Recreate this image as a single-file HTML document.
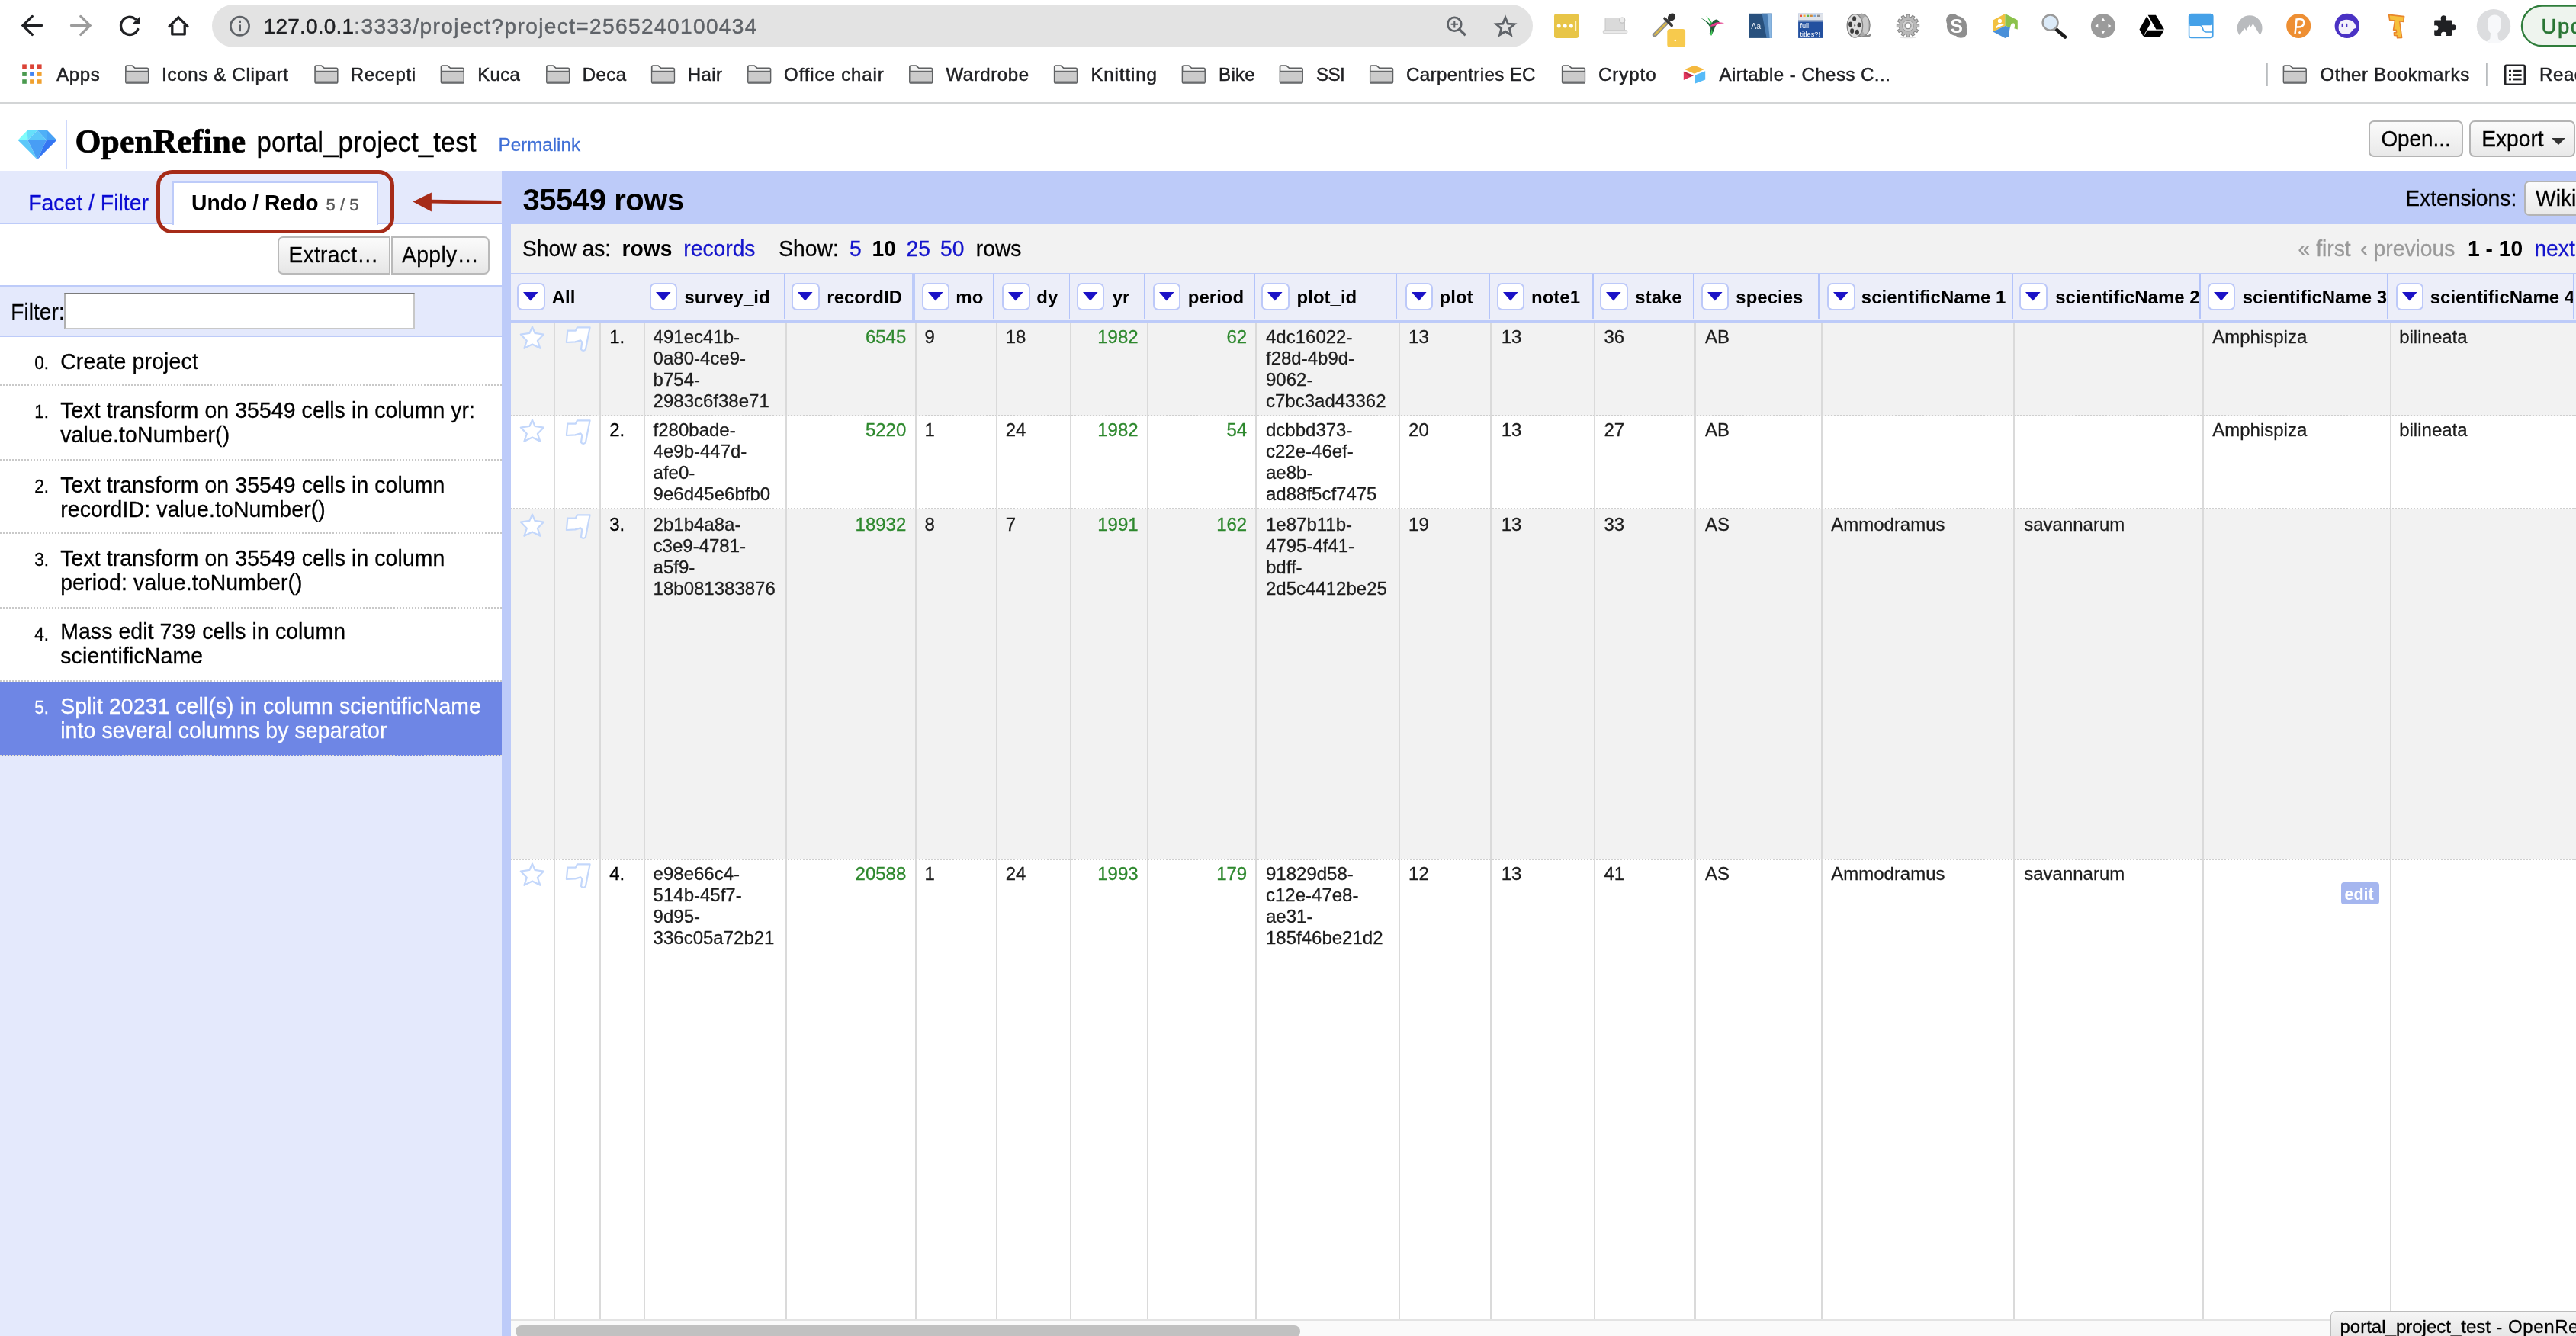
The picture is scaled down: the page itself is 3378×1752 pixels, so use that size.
<!DOCTYPE html>
<html lang="en"><head><meta charset="utf-8"><title>portal_project_test - OpenRefine</title>
<style>
html,body{margin:0;padding:0}
body{width:3378px;height:1752px;position:relative;overflow:hidden;background:#fff;font-family:'Liberation Sans',sans-serif;}
#page{position:absolute;left:0;top:0;width:3378px;height:1752px;overflow:hidden;will-change:transform}
.t{position:absolute;white-space:pre;line-height:1em;-webkit-text-stroke:0.3px;}
.r{position:absolute;}
svg{position:absolute;overflow:visible}
.ml{position:absolute;white-space:pre;}
</style></head>
<body>
<div id="page">
<svg style="left:0;top:0" width="3378" height="135" viewBox="0 0 3378 135"><rect x="278" y="6" width="1732" height="56" rx="28" fill="#e3e3e3"/>
<path d="M54.6,33.4 H31 M42.3,21.4 L30,33.4 L42.3,45.4" fill="none" stroke="#202124" stroke-width="3.3" stroke-linecap="round" stroke-linejoin="miter"/>
<path d="M93.5,33.4 H117 M105.8,21.4 L118.1,33.4 L105.8,45.4" fill="none" stroke="#9c9c9c" stroke-width="3.3" stroke-linecap="round" stroke-linejoin="miter"/>
<path d="M177.6,25 A11.6,11.6 0 1 0 180.8,38.4" fill="none" stroke="#202124" stroke-width="3.3" stroke-linecap="round"/>
<polygon points="184,21 184,31.8 173.2,31.8" fill="#202124"/>
<path d="M222,34.6 L234,22.8 L246,34.6" fill="none" stroke="#202124" stroke-width="3.3" stroke-linecap="round" stroke-linejoin="miter"/>
<path d="M225.8,32.5 V44.9 H242.2 V32.5" fill="none" stroke="#202124" stroke-width="3.3" stroke-linejoin="round"/>
<circle cx="314.5" cy="34.3" r="12.1" fill="none" stroke="#5f6368" stroke-width="2.7"/>
<rect x="313" y="26.8" width="3" height="3.2" fill="#5f6368"/><rect x="313" y="32.4" width="3" height="8.8" fill="#5f6368"/>
<circle cx="1907.3" cy="31.8" r="8.9" fill="none" stroke="#5f6368" stroke-width="2.8"/>
<path d="M1913.9,38.6 L1921.8,46.3" stroke="#5f6368" stroke-width="3.4" stroke-linecap="butt"/>
<path d="M1902.6,31.8 H1912 M1907.3,27.1 V36.5" stroke="#5f6368" stroke-width="2.1"/>
<polygon points="1974.05,23.00 1977.34,31.07 1986.03,31.71 1979.38,37.33 1981.46,45.79 1974.05,41.20 1966.64,45.79 1968.72,37.33 1962.07,31.71 1970.76,31.07" fill="none" stroke="#5f6368" stroke-width="2.8" stroke-linejoin="miter"/>
<rect x="2038" y="18" width="32.2" height="32" rx="3.2" fill="#e8c547"/>
<circle cx="2044.2" cy="34" r="2.5" fill="#fff"/>
<circle cx="2052.2" cy="34" r="2.5" fill="#fff"/>
<circle cx="2060.4" cy="34" r="2.5" fill="#fff"/>
<rect x="2065.6" y="27.6" width="1.6" height="12.8" fill="#fff3c8"/>
<path d="M2106,23.5 H2129.5 Q2130.5,23.5 2130.5,24.5 V39.6 H2105 V24.5 Q2105,23.5 2106,23.5Z" fill="#dadada" stroke="#c6c6c6" stroke-width="1"/>
<rect x="2102.3" y="39.6" width="31.5" height="4.2" rx="1.4" fill="#e9e9e9" stroke="#c9c9c9" stroke-width="0.9"/>
<circle cx="2127.2" cy="26.6" r="3.6" fill="#ececec" stroke="#c2c2c2" stroke-width="1.2"/>
<path d="M2169.6,46 L2187.6,27.6" stroke="#8d8d8d" stroke-width="5.6" stroke-linecap="round"/>
<path d="M2170.4,45.2 L2184.5,30.8" stroke="#d9b84a" stroke-width="2.6" stroke-linecap="round"/>
<path d="M2183,24.2 L2192.2,33.4" stroke="#3a3a3a" stroke-width="3.6" stroke-linecap="round"/>
<ellipse cx="2192" cy="22.6" rx="5.6" ry="4.6" transform="rotate(-45 2192 22.6)" fill="#2f2f2f"/>
<rect x="2186.3" y="38" width="23.8" height="24" rx="3.6" fill="#f7ca4d"/>
<circle cx="2196.8" cy="53" r="1.3" fill="#fff"/>
<path d="M2229.8,23.4 Q2238.6,26.6 2244.6,33.8 L2242.4,35.4 Q2237.6,27.6 2229.8,23.4Z" fill="#1f6e3c"/>
<path d="M2237.2,20.9 Q2243.4,25.2 2246.2,32.4 L2243.4,33.6 Q2242,26.4 2237.2,20.9Z" fill="#3fc255"/>
<path d="M2243.2,33 Q2246,27 2250.2,25.6 Q2254.2,26 2254.6,29.6 Q2250.6,31.4 2248.8,36 Q2247.4,41 2244.2,46.4 L2241.6,44.6 Q2243.8,39.6 2243.2,33Z" fill="#1f5a36"/>
<path d="M2244.6,38 Q2246.6,42 2244.4,46.6 L2242.6,46 Q2244,42 2244.6,38Z" fill="#45cf5c"/>
<path d="M2242.2,34.6 Q2247,29.6 2253.8,29 Q2258.4,29.4 2261.4,31.4 Q2256.4,30.6 2252.6,32 Q2247.4,35.4 2242.2,34.6Z" fill="#e23b8c"/>
<path d="M2255,29.6 Q2258.6,29.6 2261.4,31.4" fill="none" stroke="#f3a6c8" stroke-width="1"/>
<rect x="2293.7" y="17.8" width="30.1" height="32.1" fill="#28507d"/>
<polygon points="2310.6,17.8 2323.8,17.8 2323.8,49.9 2316.6,49.9" fill="#4a7db3"/>
<polygon points="2317.6,17.8 2323.8,17.8 2323.8,49.9 2320.6,49.9" fill="#8bb7e2"/>
<text x="2296.2" y="38.4" font-family="Liberation Sans, sans-serif" font-size="10.5" fill="#e8eef6">Aa</text>
<rect x="2358.1" y="17.8" width="31.9" height="32.1" fill="#23509f"/>
<rect x="2358.1" y="17.8" width="31.9" height="8.6" fill="#dfe3ea"/>
<rect x="2358.1" y="26.4" width="31.9" height="2" fill="#b8c3d6"/>
<rect x="2360.0" y="19.6" width="3" height="2.4" fill="#e8553d"/>
<rect x="2364.6" y="19.6" width="3" height="2.4" fill="#f3b13a"/>
<rect x="2369.2" y="19.6" width="3" height="2.4" fill="#5fb24c"/>
<rect x="2373.8" y="19.6" width="3" height="2.4" fill="#d08a3c"/>
<rect x="2378.4" y="19.6" width="3" height="2.4" fill="#7aa7d9"/>
<rect x="2383.0" y="19.6" width="3" height="2.4" fill="#8f8f8f"/>
<text x="2360.4" y="37.4" font-family="Liberation Sans, sans-serif" font-size="9.2" fill="#fff">full</text>
<text x="2360.4" y="47.6" font-family="Liberation Sans, sans-serif" font-size="9.2" fill="#fff">titles?!</text>
<ellipse cx="2441.6" cy="33.2" rx="10.6" ry="15" fill="#a9a9a9" stroke="#7c7c7c" stroke-width="1"/>
<path d="M2446,45 Q2450.8,47.8 2453.8,42.2 L2453.8,46.4 Q2450,50.4 2443,48.4Z" fill="#8a8a8a"/>
<ellipse cx="2446" cy="33" rx="4.4" ry="11.6" fill="#c9c9c9"/>
<ellipse cx="2432.4" cy="33.8" rx="10.2" ry="15.2" fill="#dedede" stroke="#808080" stroke-width="1.3"/>
<ellipse cx="2431.6" cy="24.6" rx="2.5" ry="3.4" fill="#3d3d3d"/>
<ellipse cx="2426.6" cy="31.8" rx="2.5" ry="3.4" fill="#3d3d3d"/>
<ellipse cx="2428.6" cy="40.6" rx="2.5" ry="3.4" fill="#3d3d3d"/>
<ellipse cx="2435.4" cy="42.2" rx="2.5" ry="3.4" fill="#3d3d3d"/>
<ellipse cx="2438" cy="32.8" rx="2.5" ry="3.4" fill="#3d3d3d"/>
<ellipse cx="2432.2" cy="33.4" rx="1" ry="1.4" fill="#555"/>
<polygon points="2513.42,31.79 2516.61,32.14 2516.61,35.46 2513.42,35.81 2512.90,37.77 2515.48,39.66 2513.82,42.54 2510.89,41.26 2509.46,42.69 2510.74,45.62 2507.86,47.28 2505.97,44.70 2504.01,45.22 2503.66,48.41 2500.34,48.41 2499.99,45.22 2498.03,44.70 2496.14,47.28 2493.26,45.62 2494.54,42.69 2493.11,41.26 2490.18,42.54 2488.52,39.66 2491.10,37.77 2490.58,35.81 2487.39,35.46 2487.39,32.14 2490.58,31.79 2491.10,29.83 2488.52,27.94 2490.18,25.06 2493.11,26.34 2494.54,24.91 2493.26,21.98 2496.14,20.32 2498.03,22.90 2499.99,22.38 2500.34,19.19 2503.66,19.19 2504.01,22.38 2505.97,22.90 2507.86,20.32 2510.74,21.98 2509.46,24.91 2510.89,26.34 2513.82,25.06 2515.48,27.94 2512.90,29.83" fill="#b9b9b9" stroke="#8a8a8a" stroke-width="1.1" stroke-linejoin="round"/>
<circle cx="2502" cy="33.8" r="7.4" fill="#cfcfcf" stroke="#9a9a9a" stroke-width="1"/>
<circle cx="2502" cy="33.8" r="3.9" fill="#fff" stroke="#8b8b8b" stroke-width="1.3"/>
<ellipse cx="2502" cy="49.4" rx="11" ry="0.9" fill="#e3e3e3"/>
<circle cx="2560.6" cy="26.6" r="8.6" fill="#8e8e8e"/><circle cx="2571.4" cy="41.2" r="8.6" fill="#8e8e8e"/><circle cx="2566" cy="34" r="13" fill="#8e8e8e"/>
<text x="2557.2" y="42.6" font-family="Liberation Sans, sans-serif" font-weight="700" font-size="25" fill="#fff">S</text>
<polygon points="2613.4,26.6 2629.4,18 2629.4,34 2613.4,41.4" fill="#f2c141"/>
<polygon points="2629.4,18 2645.8,26.6 2645.8,38.6 2636,36 2629.4,34" fill="#8cc24c"/>
<polygon points="2613.4,41.4 2629.4,34 2636,36 2634,48 2629.4,50" fill="#4a90d9"/>
<circle cx="2622.4" cy="27.4" r="2.6" fill="#fff"/><path d="M2617,35.6 Q2622.4,29 2627.8,32.4 L2617,37.4Z" fill="#fff"/>
<path d="M2636,36 Q2637,30 2641,30.6 Q2643,32 2641,38.6 L2634,48Z" fill="#fff"/>
<path d="M2696.4,38.4 L2708,48.6" stroke="#1c1c1c" stroke-width="4.6" stroke-linecap="round"/>
<circle cx="2688.6" cy="29.6" r="10" fill="#dcebf9" stroke="#9a9a9a" stroke-width="2.4"/>
<circle cx="2757.9" cy="34" r="16" fill="#9b9b9b"/>
<polygon points="2757.9,23.4 2760.4,27.4 2755.4,27.4" fill="#fff"/><polygon points="2757.9,44.6 2760.4,40.6 2755.4,40.6" fill="#fff"/>
<polygon points="2747.3,34 2751.3,31.5 2751.3,36.5" fill="#fff"/><polygon points="2768.5,34 2764.5,31.5 2764.5,36.5" fill="#fff"/>
<polygon points="2816.6,19.8 2827,19.8 2838,38.6 2827.4,38.6" fill="#000"/>
<polygon points="2815.2,21.2 2820.4,30.2 2810.4,47.6 2805.5,38.6" fill="#000"/>
<polygon points="2815.8,39.8 2837.8,39.8 2832.6,48.2 2811,48.2" fill="#000"/>
<rect x="2870.6" y="18.6" width="31.2" height="30.8" rx="3" fill="#fff" stroke="#45a1e8" stroke-width="1.6"/>
<rect x="2870.6" y="18.6" width="31.2" height="14.6" rx="3" fill="#45a1e8"/>
<path d="M2871.4,33.2 H2884.6 Q2887.6,33.4 2888.6,37.6 Q2889.6,42 2893.2,42 H2901" fill="none" stroke="#45a1e8" stroke-width="1.6"/>
<path d="M2936.6,46 A16.4,16.4 0 1 1 2963.6,46 L2954.4,31 L2951.6,35.6 L2949.8,32.6 L2945.4,40 L2943.4,37 Z" fill="#b9bbbe"/>
<circle cx="3014.2" cy="33.9" r="16" fill="#ee8f33"/>
<path d="M3009.6,43.6 L3011.6,25.4 Q3021.6,23.6 3021.2,30.2 Q3020.6,36.4 3011,35.2" fill="none" stroke="#fff" stroke-width="2.5" stroke-linecap="round"/><circle cx="3015.6" cy="42.6" r="1.5" fill="#fff"/>
<circle cx="3077.8" cy="33.9" r="16.2" fill="#4a32c4"/>
<path d="M3066.6,36.6 Q3066.6,25.8 3077,25.8 Q3088.2,25.8 3089.8,37 Q3086,37.4 3084.4,40.6 Q3080.6,45.8 3073.6,45 Q3066.6,43.6 3066.6,36.6Z" fill="#f3f0fb"/>
<rect x="3070.6" y="30.8" width="2.3" height="5.2" rx="1.1" fill="#4a32c4"/><rect x="3076" y="30.8" width="2.3" height="5.2" rx="1.1" fill="#4a32c4"/>
<path d="M3132.6,19.4 L3152.6,21.6 L3151.8,28.4 L3146.6,27.8 L3149.6,49.4 L3143.6,49.8 L3143.2,46.6 L3139.6,46.4 L3139.4,42.8 L3142.6,42.6 L3142.2,39.4 L3138.6,39.2 L3140.4,27 L3133.6,26.2Z" fill="#f6c03c" stroke="#e8862c" stroke-width="1.6" stroke-linejoin="round"/>
<path d="M3193.6,26.4 H3201 Q3199.4,20.4 3204.4,20.2 Q3209.4,20.4 3207.8,26.4 H3214 Q3215.4,26.4 3215.4,27.8 V32.6 Q3220.6,31.2 3220.6,35.8 Q3220.6,40.4 3215.4,39 V45.6 Q3215.4,47 3214,47 H3208 Q3209.2,41.8 3204.6,41.8 Q3200,41.8 3201.2,47 H3193.6 Q3192.2,47 3192.2,45.6 V39.4 Q3197.4,40.4 3197.4,36.4 Q3197.4,32.4 3192.2,33.4 V27.8 Q3192.2,26.4 3193.6,26.4Z" fill="#202124"/>
<circle cx="3270" cy="34.2" r="22.2" fill="#dcdddf"/>
<path d="M3262,33 Q3261,19.6 3271.4,19.4 Q3281.4,19.6 3279.8,33.4 Q3278.6,41 3275.2,43.6 L3276,50.6 Q3278,54 3281,55 Q3270,58.6 3260,54.6 Q3264,53.4 3265.4,50.6 L3266,43.6 Q3263,41 3262,33Z" fill="#f7f8fa"/>
<rect x="3307" y="7.6" width="120" height="52.6" rx="26.3" fill="#eef4ee" stroke="#2f7d3b" stroke-width="2.4"/>
<rect x="29.2" y="84.4" width="5.6" height="5.6" fill="#db4437"/>
<rect x="39.1" y="84.4" width="5.6" height="5.6" fill="#db4437"/>
<rect x="49.0" y="84.4" width="5.6" height="5.6" fill="#db4437"/>
<rect x="29.2" y="94.3" width="5.6" height="5.6" fill="#4a9a4f"/>
<rect x="39.1" y="94.3" width="5.6" height="5.6" fill="#4285f4"/>
<rect x="49.0" y="94.3" width="5.6" height="5.6" fill="#f0a12f"/>
<rect x="29.2" y="104.2" width="5.6" height="5.6" fill="#4a9a4f"/>
<rect x="39.1" y="104.2" width="5.6" height="5.6" fill="#f0a12f"/>
<rect x="49.0" y="104.2" width="5.6" height="5.6" fill="#f0a12f"/>
<g transform="translate(164.00,85.2)"><path d="M0.9,2.6 Q0.9,0.9 2.6,0.9 L9.3,0.9 L13.1,4.2 L28.8,4.2 Q30.5,4.2 30.5,5.9 L30.5,22 Q30.5,23.7 28.8,23.7 L2.6,23.7 Q0.9,23.7 0.9,22 Z" fill="#f2f2f2" stroke="#5f6163" stroke-width="1.7" stroke-linejoin="round"/><rect x="1.7" y="8.3" width="28" height="13.6" fill="#cbcbcb"/><path d="M1,8.3 L30.4,8.3" stroke="#67696b" stroke-width="1.5"/><path d="M1.6,22.4 L29.8,22.4" stroke="#707274" stroke-width="2.2"/></g>
<g transform="translate(412.20,85.2)"><path d="M0.9,2.6 Q0.9,0.9 2.6,0.9 L9.3,0.9 L13.1,4.2 L28.8,4.2 Q30.5,4.2 30.5,5.9 L30.5,22 Q30.5,23.7 28.8,23.7 L2.6,23.7 Q0.9,23.7 0.9,22 Z" fill="#f2f2f2" stroke="#5f6163" stroke-width="1.7" stroke-linejoin="round"/><rect x="1.7" y="8.3" width="28" height="13.6" fill="#cbcbcb"/><path d="M1,8.3 L30.4,8.3" stroke="#67696b" stroke-width="1.5"/><path d="M1.6,22.4 L29.8,22.4" stroke="#707274" stroke-width="2.2"/></g>
<g transform="translate(577.60,85.2)"><path d="M0.9,2.6 Q0.9,0.9 2.6,0.9 L9.3,0.9 L13.1,4.2 L28.8,4.2 Q30.5,4.2 30.5,5.9 L30.5,22 Q30.5,23.7 28.8,23.7 L2.6,23.7 Q0.9,23.7 0.9,22 Z" fill="#f2f2f2" stroke="#5f6163" stroke-width="1.7" stroke-linejoin="round"/><rect x="1.7" y="8.3" width="28" height="13.6" fill="#cbcbcb"/><path d="M1,8.3 L30.4,8.3" stroke="#67696b" stroke-width="1.5"/><path d="M1.6,22.4 L29.8,22.4" stroke="#707274" stroke-width="2.2"/></g>
<g transform="translate(716.00,85.2)"><path d="M0.9,2.6 Q0.9,0.9 2.6,0.9 L9.3,0.9 L13.1,4.2 L28.8,4.2 Q30.5,4.2 30.5,5.9 L30.5,22 Q30.5,23.7 28.8,23.7 L2.6,23.7 Q0.9,23.7 0.9,22 Z" fill="#f2f2f2" stroke="#5f6163" stroke-width="1.7" stroke-linejoin="round"/><rect x="1.7" y="8.3" width="28" height="13.6" fill="#cbcbcb"/><path d="M1,8.3 L30.4,8.3" stroke="#67696b" stroke-width="1.5"/><path d="M1.6,22.4 L29.8,22.4" stroke="#707274" stroke-width="2.2"/></g>
<g transform="translate(853.80,85.2)"><path d="M0.9,2.6 Q0.9,0.9 2.6,0.9 L9.3,0.9 L13.1,4.2 L28.8,4.2 Q30.5,4.2 30.5,5.9 L30.5,22 Q30.5,23.7 28.8,23.7 L2.6,23.7 Q0.9,23.7 0.9,22 Z" fill="#f2f2f2" stroke="#5f6163" stroke-width="1.7" stroke-linejoin="round"/><rect x="1.7" y="8.3" width="28" height="13.6" fill="#cbcbcb"/><path d="M1,8.3 L30.4,8.3" stroke="#67696b" stroke-width="1.5"/><path d="M1.6,22.4 L29.8,22.4" stroke="#707274" stroke-width="2.2"/></g>
<g transform="translate(980.00,85.2)"><path d="M0.9,2.6 Q0.9,0.9 2.6,0.9 L9.3,0.9 L13.1,4.2 L28.8,4.2 Q30.5,4.2 30.5,5.9 L30.5,22 Q30.5,23.7 28.8,23.7 L2.6,23.7 Q0.9,23.7 0.9,22 Z" fill="#f2f2f2" stroke="#5f6163" stroke-width="1.7" stroke-linejoin="round"/><rect x="1.7" y="8.3" width="28" height="13.6" fill="#cbcbcb"/><path d="M1,8.3 L30.4,8.3" stroke="#67696b" stroke-width="1.5"/><path d="M1.6,22.4 L29.8,22.4" stroke="#707274" stroke-width="2.2"/></g>
<g transform="translate(1192.00,85.2)"><path d="M0.9,2.6 Q0.9,0.9 2.6,0.9 L9.3,0.9 L13.1,4.2 L28.8,4.2 Q30.5,4.2 30.5,5.9 L30.5,22 Q30.5,23.7 28.8,23.7 L2.6,23.7 Q0.9,23.7 0.9,22 Z" fill="#f2f2f2" stroke="#5f6163" stroke-width="1.7" stroke-linejoin="round"/><rect x="1.7" y="8.3" width="28" height="13.6" fill="#cbcbcb"/><path d="M1,8.3 L30.4,8.3" stroke="#67696b" stroke-width="1.5"/><path d="M1.6,22.4 L29.8,22.4" stroke="#707274" stroke-width="2.2"/></g>
<g transform="translate(1381.80,85.2)"><path d="M0.9,2.6 Q0.9,0.9 2.6,0.9 L9.3,0.9 L13.1,4.2 L28.8,4.2 Q30.5,4.2 30.5,5.9 L30.5,22 Q30.5,23.7 28.8,23.7 L2.6,23.7 Q0.9,23.7 0.9,22 Z" fill="#f2f2f2" stroke="#5f6163" stroke-width="1.7" stroke-linejoin="round"/><rect x="1.7" y="8.3" width="28" height="13.6" fill="#cbcbcb"/><path d="M1,8.3 L30.4,8.3" stroke="#67696b" stroke-width="1.5"/><path d="M1.6,22.4 L29.8,22.4" stroke="#707274" stroke-width="2.2"/></g>
<g transform="translate(1549.60,85.2)"><path d="M0.9,2.6 Q0.9,0.9 2.6,0.9 L9.3,0.9 L13.1,4.2 L28.8,4.2 Q30.5,4.2 30.5,5.9 L30.5,22 Q30.5,23.7 28.8,23.7 L2.6,23.7 Q0.9,23.7 0.9,22 Z" fill="#f2f2f2" stroke="#5f6163" stroke-width="1.7" stroke-linejoin="round"/><rect x="1.7" y="8.3" width="28" height="13.6" fill="#cbcbcb"/><path d="M1,8.3 L30.4,8.3" stroke="#67696b" stroke-width="1.5"/><path d="M1.6,22.4 L29.8,22.4" stroke="#707274" stroke-width="2.2"/></g>
<g transform="translate(1677.60,85.2)"><path d="M0.9,2.6 Q0.9,0.9 2.6,0.9 L9.3,0.9 L13.1,4.2 L28.8,4.2 Q30.5,4.2 30.5,5.9 L30.5,22 Q30.5,23.7 28.8,23.7 L2.6,23.7 Q0.9,23.7 0.9,22 Z" fill="#f2f2f2" stroke="#5f6163" stroke-width="1.7" stroke-linejoin="round"/><rect x="1.7" y="8.3" width="28" height="13.6" fill="#cbcbcb"/><path d="M1,8.3 L30.4,8.3" stroke="#67696b" stroke-width="1.5"/><path d="M1.6,22.4 L29.8,22.4" stroke="#707274" stroke-width="2.2"/></g>
<g transform="translate(1795.90,85.2)"><path d="M0.9,2.6 Q0.9,0.9 2.6,0.9 L9.3,0.9 L13.1,4.2 L28.8,4.2 Q30.5,4.2 30.5,5.9 L30.5,22 Q30.5,23.7 28.8,23.7 L2.6,23.7 Q0.9,23.7 0.9,22 Z" fill="#f2f2f2" stroke="#5f6163" stroke-width="1.7" stroke-linejoin="round"/><rect x="1.7" y="8.3" width="28" height="13.6" fill="#cbcbcb"/><path d="M1,8.3 L30.4,8.3" stroke="#67696b" stroke-width="1.5"/><path d="M1.6,22.4 L29.8,22.4" stroke="#707274" stroke-width="2.2"/></g>
<g transform="translate(2047.80,85.2)"><path d="M0.9,2.6 Q0.9,0.9 2.6,0.9 L9.3,0.9 L13.1,4.2 L28.8,4.2 Q30.5,4.2 30.5,5.9 L30.5,22 Q30.5,23.7 28.8,23.7 L2.6,23.7 Q0.9,23.7 0.9,22 Z" fill="#f2f2f2" stroke="#5f6163" stroke-width="1.7" stroke-linejoin="round"/><rect x="1.7" y="8.3" width="28" height="13.6" fill="#cbcbcb"/><path d="M1,8.3 L30.4,8.3" stroke="#67696b" stroke-width="1.5"/><path d="M1.6,22.4 L29.8,22.4" stroke="#707274" stroke-width="2.2"/></g>
<g transform="translate(2993.60,85.2)"><path d="M0.9,2.6 Q0.9,0.9 2.6,0.9 L9.3,0.9 L13.1,4.2 L28.8,4.2 Q30.5,4.2 30.5,5.9 L30.5,22 Q30.5,23.7 28.8,23.7 L2.6,23.7 Q0.9,23.7 0.9,22 Z" fill="#f2f2f2" stroke="#5f6163" stroke-width="1.7" stroke-linejoin="round"/><rect x="1.7" y="8.3" width="28" height="13.6" fill="#cbcbcb"/><path d="M1,8.3 L30.4,8.3" stroke="#67696b" stroke-width="1.5"/><path d="M1.6,22.4 L29.8,22.4" stroke="#707274" stroke-width="2.2"/></g>
<polygon points="2209.2,91 2221.8,85.8 2234.8,91 2221.8,96.8" fill="#f5b93f"/>
<polygon points="2207.8,93.8 2221,99 2207.8,105" fill="#e1365b"/><polygon points="2207.8,93.8 2221,99 2216,101.2" fill="#b62a4a"/>
<polygon points="2223,98.4 2236.2,93.2 2236.2,104.4 2223,109.6" fill="#57bbf8"/>
<rect x="2972" y="82" width="1.8" height="31" fill="#b9bcbf"/><rect x="3260" y="82" width="1.8" height="31" fill="#b9bcbf"/>
<rect x="3285.2" y="85.8" width="25.6" height="25" rx="1.6" fill="none" stroke="#202124" stroke-width="2.6"/>
<rect x="3290" y="91.8" width="3" height="2.8" fill="#202124"/><rect x="3295.6" y="91.8" width="11" height="2.8" fill="#202124"/>
<rect x="3290" y="97.2" width="3" height="2.8" fill="#202124"/><rect x="3295.6" y="97.2" width="11" height="2.8" fill="#202124"/>
<rect x="3290" y="102.6" width="3" height="2.8" fill="#202124"/><rect x="3295.6" y="102.6" width="11" height="2.8" fill="#202124"/></svg>
<div class="r" style="left:0.00px;top:134.20px;width:3378.00px;height:2.00px;background:#d3d5d6;"></div>
<span class="t" style="left:345.70px;top:21.00px;font-size:28px;color:#202124;letter-spacing:0.203px;-webkit-text-stroke:0.5px;">127.0.0.1</span>
<span class="t" style="left:464.30px;top:21.00px;font-size:28px;color:#5f6368;letter-spacing:1.406px;-webkit-text-stroke:0.5px;">:3333/project?project=2565240100434</span>
<span class="t" style="left:74.20px;top:86.00px;font-size:24px;color:#202124;letter-spacing:0.624px;-webkit-text-stroke:0.5px;">Apps</span>
<span class="t" style="left:212.10px;top:86.00px;font-size:24px;color:#202124;letter-spacing:0.696px;-webkit-text-stroke:0.5px;">Icons &amp; Clipart</span>
<span class="t" style="left:459.70px;top:86.00px;font-size:24px;color:#202124;letter-spacing:0.689px;-webkit-text-stroke:0.5px;">Recepti</span>
<span class="t" style="left:626.20px;top:86.00px;font-size:24px;color:#202124;letter-spacing:0.349px;-webkit-text-stroke:0.5px;">Kuca</span>
<span class="t" style="left:763.70px;top:86.00px;font-size:24px;color:#202124;letter-spacing:0.468px;-webkit-text-stroke:0.5px;">Deca</span>
<span class="t" style="left:901.70px;top:86.00px;font-size:24px;color:#202124;letter-spacing:0.398px;-webkit-text-stroke:0.5px;">Hair</span>
<span class="t" style="left:1028.10px;top:86.00px;font-size:24px;color:#202124;letter-spacing:0.889px;-webkit-text-stroke:0.5px;">Office chair</span>
<span class="t" style="left:1240.40px;top:86.00px;font-size:24px;color:#202124;letter-spacing:0.589px;-webkit-text-stroke:0.5px;">Wardrobe</span>
<span class="t" style="left:1430.40px;top:86.00px;font-size:24px;color:#202124;letter-spacing:0.919px;-webkit-text-stroke:0.5px;">Knitting</span>
<span class="t" style="left:1598.10px;top:86.00px;font-size:24px;color:#202124;letter-spacing:0.278px;-webkit-text-stroke:0.5px;">Bike</span>
<span class="t" style="left:1726.10px;top:86.00px;font-size:24px;color:#202124;letter-spacing:-0.528px;-webkit-text-stroke:0.5px;">SSI</span>
<span class="t" style="left:1844.00px;top:86.00px;font-size:24px;color:#202124;letter-spacing:0.410px;-webkit-text-stroke:0.5px;">Carpentries EC</span>
<span class="t" style="left:2096.00px;top:86.00px;font-size:24px;color:#202124;letter-spacing:0.985px;-webkit-text-stroke:0.5px;">Crypto</span>
<span class="t" style="left:2254.40px;top:86.00px;font-size:24px;color:#202124;letter-spacing:0.484px;-webkit-text-stroke:0.5px;">Airtable - Chess C...</span>
<span class="t" style="left:3042.50px;top:86.00px;font-size:24px;color:#202124;letter-spacing:0.645px;-webkit-text-stroke:0.5px;">Other Bookmarks</span>
<span class="t" style="left:3330.10px;top:86.00px;font-size:24px;color:#202124;letter-spacing:0.566px;-webkit-text-stroke:0.5px;">Reading list</span>
<span class="t" style="left:3332.60px;top:21.00px;font-size:27.5px;color:#2a7635;letter-spacing:1.554px;-webkit-text-stroke:0.55px;">Update</span>
<svg style="left:0;top:150px" width="110" height="80" viewBox="0 150 110 80">
<polygon points="23.5,183.8 35.7,171 36.3,183.8" fill="#7ffcfb"/>
<polygon points="35.7,171 48.9,171 36.3,183.8" fill="#66e0fa"/>
<polygon points="48.9,171 60.9,183.8 36.3,183.8" fill="#5cc8f9"/>
<polygon points="48.9,171 62.1,171 60.9,183.8" fill="#4fb0f7"/>
<polygon points="62.1,171 74.4,183.8 60.9,183.8" fill="#48a2f5"/>
<polygon points="23.5,183.8 36.3,183.8 48.9,209.3" fill="#5cc8f9"/>
<polygon points="36.3,183.8 60.9,183.8 48.9,209.3" fill="#489ef5"/>
<polygon points="60.9,183.8 74.4,183.8 48.9,209.3" fill="#3576f2"/>
</svg>
<div class="r" style="left:86.20px;top:158.00px;width:2.00px;height:63.70px;background:#ced8fb;"></div>
<span class="t" style="left:98.60px;top:164.00px;font-size:43.75px;color:#000;font-weight:700;-webkit-text-stroke:0;font-family:'Liberation Serif', serif;-webkit-text-stroke:0.7px #000;">OpenRefine</span>
<span class="t" style="left:336.60px;top:169.00px;font-size:35px;color:#000;transform:scaleY(1.035);transform-origin:0 30px;">portal_project_test</span>
<span class="t" style="left:653.50px;top:178.00px;font-size:24.2px;color:#3f6fd6;transform:scaleY(1.02);transform-origin:0 20px;">Permalink</span>
<div class="r" style="left:3106.00px;top:158.40px;width:123.60px;height:47.20px;background:;border:2px solid #b4b4b4;border-radius:7px;box-sizing:border-box;background:linear-gradient(#fbfbfb,#e9e9e9);"></div>
<span class="t" style="left:3122.40px;top:169.00px;font-size:27.9px;color:#000;transform:scaleY(1.035);transform-origin:0 23px;">Open...</span>
<div class="r" style="left:3238.40px;top:158.40px;width:138.80px;height:47.20px;background:;border:2px solid #b4b4b4;border-radius:7px;box-sizing:border-box;background:linear-gradient(#fbfbfb,#e9e9e9);"></div>
<span class="t" style="left:3254.20px;top:168.00px;font-size:28.2px;color:#000;transform:scaleY(1.035);transform-origin:0 24px;">Export</span>
<svg style="left:3346px;top:180.5px" width="18" height="9" viewBox="0 0 18 9"><polygon points="0,0 18,0 9,9" fill="#333"/></svg>
<div class="r" style="left:0.00px;top:223.70px;width:658.30px;height:1528.30px;background:#e4e9fc;"></div>
<div class="r" style="left:0.00px;top:291.80px;width:658.30px;height:2.10px;background:#bdcbf9;"></div>
<span class="t" style="left:37.20px;top:252.00px;font-size:28.4px;color:#0a0ad2;transform:scaleY(1.035);transform-origin:0 24px;">Facet / Filter</span>
<div class="r" style="left:0.00px;top:293.90px;width:658.30px;height:80.10px;background:#fff;"></div>
<div class="r" style="left:226.00px;top:238.20px;width:269.80px;height:57.30px;background:#fff;border:2px solid #bdcbf9;border-bottom:none;box-sizing:border-box;"></div>
<span class="t" style="left:251.00px;top:252.00px;font-size:28.3px;color:#000;font-weight:700;-webkit-text-stroke:0;transform:scaleY(1.02);transform-origin:0 24px;">Undo / Redo</span>
<span class="t" style="left:427.60px;top:258.00px;font-size:22.1px;color:#555;transform:scaleY(1.02);transform-origin:0 18px;">5 / 5</span>
<div class="r" style="left:364.30px;top:310.30px;width:147.80px;height:49.70px;background:;border:2px solid #b9b9b9;box-sizing:border-box;background:linear-gradient(#fbfbfb,#e6e6e6);border-radius:7px 0 0 7px;"></div>
<div class="r" style="left:513.00px;top:310.30px;width:128.70px;height:49.70px;background:;border:2px solid #b9b9b9;box-sizing:border-box;background:linear-gradient(#fbfbfb,#e6e6e6);border-radius:0 7px 7px 0;"></div>
<span class="t" style="left:378.40px;top:321.00px;font-size:28.1px;color:#000;letter-spacing:0.357px;transform:scaleY(1.035);transform-origin:0 23px;">Extract…</span>
<span class="t" style="left:526.90px;top:320.00px;font-size:28.3px;color:#000;letter-spacing:0.384px;transform:scaleY(1.035);transform-origin:0 24px;">Apply…</span>
<div class="r" style="left:0.00px;top:374.00px;width:658.30px;height:2.20px;background:#bdcbf9;"></div>
<span class="t" style="left:14.20px;top:396.00px;font-size:28px;color:#000;letter-spacing:0.086px;transform:scaleY(1.035);transform-origin:0 23px;">Filter:</span>
<div class="r" style="left:84.00px;top:384.20px;width:459.80px;height:47.40px;background:#fff;box-sizing:border-box;border:2px solid #c8c8c8;border-top-color:#7b7b7b;border-left-color:#b0b0b0;"></div>
<div class="r" style="left:0.00px;top:439.90px;width:658.30px;height:2.40px;background:#bdcbf9;"></div>
<div class="r" style="left:0.00px;top:442.30px;width:658.30px;height:451.90px;background:#fff;"></div>
<div class="r" style="left:0.00px;top:894.20px;width:658.30px;height:97.90px;background:#6e86e5;"></div>
<div class="r" style="left:0;top:503.8px;width:658.3px;border-top:2px dotted #c9c9c9;height:0;background:none;"></div>
<div class="r" style="left:0;top:602px;width:658.3px;border-top:2px dotted #c9c9c9;height:0;background:none;"></div>
<div class="r" style="left:0;top:697.8px;width:658.3px;border-top:2px dotted #c9c9c9;height:0;background:none;"></div>
<div class="r" style="left:0;top:795.8px;width:658.3px;border-top:2px dotted #c9c9c9;height:0;background:none;"></div>
<div class="r" style="left:0;top:892.2px;width:658.3px;border-top:2px dotted #c9c9c9;height:0;background:none;"></div>
<div class="r" style="left:0;top:990.1px;width:658.3px;border-top:2px dotted #e6e2d2;height:0"></div>
<span class="t" style="left:45.20px;top:466.00px;font-size:22.6px;color:#000;transform:scaleY(1.02);transform-origin:0 18px;">0.</span>
<span class="t" style="left:79.20px;top:460.00px;font-size:28.4px;color:#000;letter-spacing:0.180px;transform:scaleY(1.035);transform-origin:0 24px;">Create project</span>
<span class="t" style="left:45.20px;top:530.00px;font-size:22.6px;color:#000;transform:scaleY(1.02);transform-origin:0 18px;">1.</span>
<span class="t" style="left:79.20px;top:524.00px;font-size:28.4px;color:#000;letter-spacing:0.099px;transform:scaleY(1.035);transform-origin:0 24px;">Text transform on 35549 cells in column yr:</span>
<span class="t" style="left:79.20px;top:556.00px;font-size:28.4px;color:#000;letter-spacing:0.175px;transform:scaleY(1.035);transform-origin:0 24px;">value.toNumber()</span>
<span class="t" style="left:45.20px;top:628.00px;font-size:22.6px;color:#000;transform:scaleY(1.02);transform-origin:0 18px;">2.</span>
<span class="t" style="left:79.20px;top:622.00px;font-size:28.4px;color:#000;letter-spacing:0.103px;transform:scaleY(1.035);transform-origin:0 24px;">Text transform on 35549 cells in column</span>
<span class="t" style="left:79.20px;top:654.00px;font-size:28.4px;color:#000;letter-spacing:0.147px;transform:scaleY(1.035);transform-origin:0 24px;">recordID: value.toNumber()</span>
<span class="t" style="left:45.20px;top:724.00px;font-size:22.6px;color:#000;transform:scaleY(1.02);transform-origin:0 18px;">3.</span>
<span class="t" style="left:79.20px;top:718.00px;font-size:28.4px;color:#000;letter-spacing:0.103px;transform:scaleY(1.035);transform-origin:0 24px;">Text transform on 35549 cells in column</span>
<span class="t" style="left:79.20px;top:750.00px;font-size:28.4px;color:#000;letter-spacing:0.145px;transform:scaleY(1.035);transform-origin:0 24px;">period: value.toNumber()</span>
<span class="t" style="left:45.20px;top:822.00px;font-size:22.6px;color:#000;transform:scaleY(1.02);transform-origin:0 18px;">4.</span>
<span class="t" style="left:79.20px;top:814.00px;font-size:28.4px;color:#000;letter-spacing:0.105px;transform:scaleY(1.035);transform-origin:0 24px;">Mass edit 739 cells in column</span>
<span class="t" style="left:79.20px;top:846.00px;font-size:28.4px;color:#000;letter-spacing:0.174px;transform:scaleY(1.035);transform-origin:0 24px;">scientificName</span>
<span class="t" style="left:45.20px;top:918.00px;font-size:22.6px;color:#fff;transform:scaleY(1.02);transform-origin:0 18px;">5.</span>
<span class="t" style="left:79.20px;top:912.00px;font-size:28.4px;color:#fff;letter-spacing:0.095px;transform:scaleY(1.035);transform-origin:0 24px;">Split 20231 cell(s) in column scientificName</span>
<span class="t" style="left:79.20px;top:944.00px;font-size:28.4px;color:#fff;letter-spacing:0.117px;transform:scaleY(1.035);transform-origin:0 24px;">into several columns by separator</span>
<div class="r" style="left:204.70px;top:223.40px;width:312.60px;height:82.70px;background:none;box-sizing:border-box;border:5.2px solid #a62b18;border-radius:20.5px;"></div>
<svg style="left:535px;top:245px" width="130" height="40" viewBox="535 245 130 40">
<polygon points="564,261.8 657.4,262.9 657.4,267.9 564,266.5" fill="#a62b18"/>
<polygon points="541.5,264.6 565.9,252.5 565.9,277.6" fill="#a62b18"/>
</svg>
<div class="r" style="left:658.30px;top:223.70px;width:2719.70px;height:70.50px;background:#bdcbf9;"></div>
<div class="r" style="left:658.30px;top:223.70px;width:11.90px;height:1528.30px;background:#bdcbf9;"></div>
<span class="t" style="left:685.40px;top:242.00px;font-size:40px;color:#000;font-weight:700;-webkit-text-stroke:0;letter-spacing:-0.421px;transform:scaleY(1.02);transform-origin:0 34px;">35549 rows</span>
<span class="t" style="left:3154.20px;top:246.00px;font-size:28.25px;color:#000;transform:scaleY(1.035);transform-origin:0 24px;">Extensions:</span>
<div class="r" style="left:3310.30px;top:236.70px;width:89.70px;height:46.60px;background:;border:2px solid #b4b4b4;border-radius:7px;box-sizing:border-box;background:linear-gradient(#fbfbfb,#e9e9e9);"></div>
<span class="t" style="left:3325.00px;top:246.00px;font-size:28.25px;color:#000;transform:scaleY(1.035);transform-origin:0 24px;">Wikidata</span>
<div class="r" style="left:670.20px;top:294.20px;width:2707.80px;height:64.30px;background:#f2f2f2;"></div>
<span class="t" style="left:685.00px;top:312.00px;font-size:28.25px;color:#000;transform:scaleY(1.035);transform-origin:0 24px;">Show as:</span>
<span class="t" style="left:815.60px;top:312.00px;font-size:28.25px;color:#000;font-weight:700;-webkit-text-stroke:0;transform:scaleY(1.02);transform-origin:0 24px;">rows</span>
<span class="t" style="left:896.30px;top:312.00px;font-size:28.25px;color:#1414cc;transform:scaleY(1.035);transform-origin:0 24px;">records</span>
<span class="t" style="left:1021.25px;top:312.00px;font-size:28.25px;color:#000;transform:scaleY(1.035);transform-origin:0 24px;">Show:</span>
<span class="t" style="left:1114.00px;top:312.00px;font-size:28.25px;color:#1414cc;transform:scaleY(1.035);transform-origin:0 24px;">5</span>
<span class="t" style="left:1143.50px;top:312.00px;font-size:28.25px;color:#000;font-weight:700;-webkit-text-stroke:0;transform:scaleY(1.02);transform-origin:0 24px;">10</span>
<span class="t" style="left:1188.50px;top:312.00px;font-size:28.25px;color:#1414cc;transform:scaleY(1.035);transform-origin:0 24px;">25</span>
<span class="t" style="left:1233.00px;top:312.00px;font-size:28.25px;color:#1414cc;transform:scaleY(1.035);transform-origin:0 24px;">50</span>
<span class="t" style="left:1279.80px;top:312.00px;font-size:28.25px;color:#000;transform:scaleY(1.035);transform-origin:0 24px;">rows</span>
<span class="t" style="left:3013.60px;top:312.00px;font-size:28.25px;color:#999;transform:scaleY(1.035);transform-origin:0 24px;">« first</span>
<span class="t" style="left:3095.30px;top:312.00px;font-size:28.25px;color:#999;transform:scaleY(1.035);transform-origin:0 24px;">‹ previous</span>
<span class="t" style="left:3236.00px;top:312.00px;font-size:28.25px;color:#000;font-weight:700;-webkit-text-stroke:0;transform:scaleY(1.02);transform-origin:0 24px;">1 - 10</span>
<span class="t" style="left:3323.40px;top:312.00px;font-size:28.25px;color:#1414cc;transform:scaleY(1.035);transform-origin:0 24px;">next ›</span>
<div class="r" style="left:670.20px;top:357.60px;width:2707.80px;height:62.80px;background:#eceef9;border-top:1.5px solid #bdcbf9;box-sizing:border-box;"></div>
<div class="r" style="left:670.20px;top:420.20px;width:2707.80px;height:3.70px;background:#bdcbf9;"></div>
<div class="r" style="left:839.60px;top:359.00px;width:1.80px;height:58.50px;background:#b4c4fa;"></div>
<div class="r" style="left:1027.85px;top:359.00px;width:1.80px;height:58.50px;background:#b4c4fa;"></div>
<div class="r" style="left:1195.50px;top:359.00px;width:4.50px;height:61.20px;background:#bdcbf9;"></div>
<div class="r" style="left:1302.10px;top:359.00px;width:1.80px;height:58.50px;background:#b4c4fa;"></div>
<div class="r" style="left:1401.60px;top:359.00px;width:1.80px;height:58.50px;background:#b4c4fa;"></div>
<div class="r" style="left:1499.85px;top:359.00px;width:1.80px;height:58.50px;background:#b4c4fa;"></div>
<div class="r" style="left:1644.10px;top:359.00px;width:1.80px;height:58.50px;background:#b4c4fa;"></div>
<div class="r" style="left:1830.35px;top:359.00px;width:1.80px;height:58.50px;background:#b4c4fa;"></div>
<div class="r" style="left:1952.10px;top:359.00px;width:1.80px;height:58.50px;background:#b4c4fa;"></div>
<div class="r" style="left:2087.85px;top:359.00px;width:1.80px;height:58.50px;background:#b4c4fa;"></div>
<div class="r" style="left:2219.85px;top:359.00px;width:1.80px;height:58.50px;background:#b4c4fa;"></div>
<div class="r" style="left:2384.10px;top:359.00px;width:1.80px;height:58.50px;background:#b4c4fa;"></div>
<div class="r" style="left:2638.35px;top:359.00px;width:1.80px;height:58.50px;background:#b4c4fa;"></div>
<div class="r" style="left:2884.10px;top:359.00px;width:1.80px;height:58.50px;background:#b4c4fa;"></div>
<div class="r" style="left:3129.80px;top:359.00px;width:1.80px;height:58.50px;background:#b4c4fa;"></div>
<div class="r" style="left:3374.10px;top:359.00px;width:1.80px;height:58.50px;background:#b4c4fa;"></div>
<div class="r" style="left:678.25px;top:371px;width:36.4px;height:36.2px;box-sizing:border-box;background:#fff;border:2px solid #bdc9f9;border-radius:7px"></div>
<svg style="left:686.45px;top:383px" width="19.6" height="11.6" viewBox="0 0 19.6 11.6"><polygon points="0,0 19.6,0 9.8,11.6" fill="#1b12c6"/></svg>
<span class="t" style="left:723.75px;top:378.00px;font-size:24px;color:#000;font-weight:700;-webkit-text-stroke:0;transform:scaleY(1.02);transform-origin:0 20px;">All</span>
<div class="r" style="left:852.00px;top:371px;width:36.4px;height:36.2px;box-sizing:border-box;background:#fff;border:2px solid #bdc9f9;border-radius:7px"></div>
<svg style="left:860.20px;top:383px" width="19.6" height="11.6" viewBox="0 0 19.6 11.6"><polygon points="0,0 19.6,0 9.8,11.6" fill="#1b12c6"/></svg>
<span class="t" style="left:897.50px;top:378.00px;font-size:24px;color:#000;font-weight:700;-webkit-text-stroke:0;transform:scaleY(1.02);transform-origin:0 20px;">survey_id</span>
<div class="r" style="left:1038.25px;top:371px;width:36.4px;height:36.2px;box-sizing:border-box;background:#fff;border:2px solid #bdc9f9;border-radius:7px"></div>
<svg style="left:1046.45px;top:383px" width="19.6" height="11.6" viewBox="0 0 19.6 11.6"><polygon points="0,0 19.6,0 9.8,11.6" fill="#1b12c6"/></svg>
<span class="t" style="left:1084.30px;top:378.00px;font-size:24px;color:#000;font-weight:700;-webkit-text-stroke:0;transform:scaleY(1.02);transform-origin:0 20px;">recordID</span>
<div class="r" style="left:1208.75px;top:371px;width:36.4px;height:36.2px;box-sizing:border-box;background:#fff;border:2px solid #bdc9f9;border-radius:7px"></div>
<svg style="left:1216.95px;top:383px" width="19.6" height="11.6" viewBox="0 0 19.6 11.6"><polygon points="0,0 19.6,0 9.8,11.6" fill="#1b12c6"/></svg>
<span class="t" style="left:1253.30px;top:378.00px;font-size:24px;color:#000;font-weight:700;-webkit-text-stroke:0;transform:scaleY(1.02);transform-origin:0 20px;">mo</span>
<div class="r" style="left:1314.25px;top:371px;width:36.4px;height:36.2px;box-sizing:border-box;background:#fff;border:2px solid #bdc9f9;border-radius:7px"></div>
<svg style="left:1322.45px;top:383px" width="19.6" height="11.6" viewBox="0 0 19.6 11.6"><polygon points="0,0 19.6,0 9.8,11.6" fill="#1b12c6"/></svg>
<span class="t" style="left:1359.30px;top:378.00px;font-size:24px;color:#000;font-weight:700;-webkit-text-stroke:0;transform:scaleY(1.02);transform-origin:0 20px;">dy</span>
<div class="r" style="left:1412.00px;top:371px;width:36.4px;height:36.2px;box-sizing:border-box;background:#fff;border:2px solid #bdc9f9;border-radius:7px"></div>
<svg style="left:1420.20px;top:383px" width="19.6" height="11.6" viewBox="0 0 19.6 11.6"><polygon points="0,0 19.6,0 9.8,11.6" fill="#1b12c6"/></svg>
<span class="t" style="left:1458.75px;top:378.00px;font-size:24px;color:#000;font-weight:700;-webkit-text-stroke:0;transform:scaleY(1.02);transform-origin:0 20px;">yr</span>
<div class="r" style="left:1512.00px;top:371px;width:36.4px;height:36.2px;box-sizing:border-box;background:#fff;border:2px solid #bdc9f9;border-radius:7px"></div>
<svg style="left:1520.20px;top:383px" width="19.6" height="11.6" viewBox="0 0 19.6 11.6"><polygon points="0,0 19.6,0 9.8,11.6" fill="#1b12c6"/></svg>
<span class="t" style="left:1557.85px;top:378.00px;font-size:24px;color:#000;font-weight:700;-webkit-text-stroke:0;transform:scaleY(1.02);transform-origin:0 20px;">period</span>
<div class="r" style="left:1654.25px;top:371px;width:36.4px;height:36.2px;box-sizing:border-box;background:#fff;border:2px solid #bdc9f9;border-radius:7px"></div>
<svg style="left:1662.45px;top:383px" width="19.6" height="11.6" viewBox="0 0 19.6 11.6"><polygon points="0,0 19.6,0 9.8,11.6" fill="#1b12c6"/></svg>
<span class="t" style="left:1700.55px;top:378.00px;font-size:24px;color:#000;font-weight:700;-webkit-text-stroke:0;transform:scaleY(1.02);transform-origin:0 20px;">plot_id</span>
<div class="r" style="left:1842.50px;top:371px;width:36.4px;height:36.2px;box-sizing:border-box;background:#fff;border:2px solid #bdc9f9;border-radius:7px"></div>
<svg style="left:1850.70px;top:383px" width="19.6" height="11.6" viewBox="0 0 19.6 11.6"><polygon points="0,0 19.6,0 9.8,11.6" fill="#1b12c6"/></svg>
<span class="t" style="left:1887.55px;top:378.00px;font-size:24px;color:#000;font-weight:700;-webkit-text-stroke:0;transform:scaleY(1.02);transform-origin:0 20px;">plot</span>
<div class="r" style="left:1962.50px;top:371px;width:36.4px;height:36.2px;box-sizing:border-box;background:#fff;border:2px solid #bdc9f9;border-radius:7px"></div>
<svg style="left:1970.70px;top:383px" width="19.6" height="11.6" viewBox="0 0 19.6 11.6"><polygon points="0,0 19.6,0 9.8,11.6" fill="#1b12c6"/></svg>
<span class="t" style="left:2008.00px;top:378.00px;font-size:24px;color:#000;font-weight:700;-webkit-text-stroke:0;transform:scaleY(1.02);transform-origin:0 20px;">note1</span>
<div class="r" style="left:2098.25px;top:371px;width:36.4px;height:36.2px;box-sizing:border-box;background:#fff;border:2px solid #bdc9f9;border-radius:7px"></div>
<svg style="left:2106.45px;top:383px" width="19.6" height="11.6" viewBox="0 0 19.6 11.6"><polygon points="0,0 19.6,0 9.8,11.6" fill="#1b12c6"/></svg>
<span class="t" style="left:2144.30px;top:378.00px;font-size:24px;color:#000;font-weight:700;-webkit-text-stroke:0;transform:scaleY(1.02);transform-origin:0 20px;">stake</span>
<div class="r" style="left:2230.75px;top:371px;width:36.4px;height:36.2px;box-sizing:border-box;background:#fff;border:2px solid #bdc9f9;border-radius:7px"></div>
<svg style="left:2238.95px;top:383px" width="19.6" height="11.6" viewBox="0 0 19.6 11.6"><polygon points="0,0 19.6,0 9.8,11.6" fill="#1b12c6"/></svg>
<span class="t" style="left:2276.30px;top:378.00px;font-size:24px;color:#000;font-weight:700;-webkit-text-stroke:0;transform:scaleY(1.02);transform-origin:0 20px;">species</span>
<div class="r" style="left:2396.25px;top:371px;width:36.4px;height:36.2px;box-sizing:border-box;background:#fff;border:2px solid #bdc9f9;border-radius:7px"></div>
<svg style="left:2404.45px;top:383px" width="19.6" height="11.6" viewBox="0 0 19.6 11.6"><polygon points="0,0 19.6,0 9.8,11.6" fill="#1b12c6"/></svg>
<div class="r" style="left:2440.85px;top:366px;width:197.45px;height:44px;overflow:hidden"><span class="t" style="left:0.00px;top:12.00px;font-size:24px;color:#000;font-weight:700;-webkit-text-stroke:0;transform:scaleY(1.02);transform-origin:0 20px;">scientificName 1</span></div>
<div class="r" style="left:2648.25px;top:371px;width:36.4px;height:36.2px;box-sizing:border-box;background:#fff;border:2px solid #bdc9f9;border-radius:7px"></div>
<svg style="left:2656.45px;top:383px" width="19.6" height="11.6" viewBox="0 0 19.6 11.6"><polygon points="0,0 19.6,0 9.8,11.6" fill="#1b12c6"/></svg>
<div class="r" style="left:2695.20px;top:366px;width:188.90px;height:44px;overflow:hidden"><span class="t" style="left:0.00px;top:12.00px;font-size:24px;color:#000;font-weight:700;-webkit-text-stroke:0;transform:scaleY(1.02);transform-origin:0 20px;">scientificName 2</span></div>
<div class="r" style="left:2894.50px;top:371px;width:36.4px;height:36.2px;box-sizing:border-box;background:#fff;border:2px solid #bdc9f9;border-radius:7px"></div>
<svg style="left:2902.70px;top:383px" width="19.6" height="11.6" viewBox="0 0 19.6 11.6"><polygon points="0,0 19.6,0 9.8,11.6" fill="#1b12c6"/></svg>
<div class="r" style="left:2940.75px;top:366px;width:189.05px;height:44px;overflow:hidden"><span class="t" style="left:0.00px;top:12.00px;font-size:24px;color:#000;font-weight:700;-webkit-text-stroke:0;transform:scaleY(1.02);transform-origin:0 20px;">scientificName 3</span></div>
<div class="r" style="left:3142.10px;top:371px;width:36.4px;height:36.2px;box-sizing:border-box;background:#fff;border:2px solid #bdc9f9;border-radius:7px"></div>
<svg style="left:3150.30px;top:383px" width="19.6" height="11.6" viewBox="0 0 19.6 11.6"><polygon points="0,0 19.6,0 9.8,11.6" fill="#1b12c6"/></svg>
<div class="r" style="left:3186.70px;top:366px;width:187.40px;height:44px;overflow:hidden"><span class="t" style="left:0.00px;top:12.00px;font-size:24px;color:#000;font-weight:700;-webkit-text-stroke:0;transform:scaleY(1.02);transform-origin:0 20px;">scientificName 4</span></div>
<div class="r" style="left:670.20px;top:423.90px;width:2707.80px;height:121.20px;background:#f2f2f2;"></div>
<div class="r" style="left:670.20px;top:545.10px;width:2707.80px;height:121.80px;background:#fff;"></div>
<div class="r" style="left:670.20px;top:666.90px;width:2707.80px;height:460.00px;background:#f2f2f2;"></div>
<div class="r" style="left:670.20px;top:1126.90px;width:2707.80px;height:603.30px;background:#fff;"></div>
<div class="r" style="left:670.2px;top:544.10px;width:2708px;height:0;border-top:2px dotted #cfcfcf"></div>
<div class="r" style="left:670.2px;top:665.90px;width:2708px;height:0;border-top:2px dotted #cfcfcf"></div>
<div class="r" style="left:670.2px;top:1125.90px;width:2708px;height:0;border-top:2px dotted #cfcfcf"></div>
<div class="r" style="left:726.00px;top:423.90px;width:2.00px;height:1306.30px;background:#dadada;"></div>
<div class="r" style="left:786.00px;top:423.90px;width:2.00px;height:1306.30px;background:#dadada;"></div>
<div class="r" style="left:844.00px;top:423.90px;width:2.00px;height:1306.30px;background:#dadada;"></div>
<div class="r" style="left:1030.00px;top:423.90px;width:2.00px;height:1306.30px;background:#dadada;"></div>
<div class="r" style="left:1200.00px;top:423.90px;width:2.00px;height:1306.30px;background:#dadada;"></div>
<div class="r" style="left:1306.00px;top:423.90px;width:2.00px;height:1306.30px;background:#dadada;"></div>
<div class="r" style="left:1403.00px;top:423.90px;width:2.00px;height:1306.30px;background:#dadada;"></div>
<div class="r" style="left:1504.00px;top:423.90px;width:2.00px;height:1306.30px;background:#dadada;"></div>
<div class="r" style="left:1646.00px;top:423.90px;width:2.00px;height:1306.30px;background:#dadada;"></div>
<div class="r" style="left:1834.00px;top:423.90px;width:2.00px;height:1306.30px;background:#dadada;"></div>
<div class="r" style="left:1954.00px;top:423.90px;width:2.00px;height:1306.30px;background:#dadada;"></div>
<div class="r" style="left:2090.00px;top:423.90px;width:2.00px;height:1306.30px;background:#dadada;"></div>
<div class="r" style="left:2222.00px;top:423.90px;width:2.00px;height:1306.30px;background:#dadada;"></div>
<div class="r" style="left:2388.00px;top:423.90px;width:2.00px;height:1306.30px;background:#dadada;"></div>
<div class="r" style="left:2640.00px;top:423.90px;width:2.00px;height:1306.30px;background:#dadada;"></div>
<div class="r" style="left:2888.00px;top:423.90px;width:2.00px;height:1306.30px;background:#dadada;"></div>
<div class="r" style="left:3134.00px;top:423.90px;width:2.00px;height:1306.30px;background:#dadada;"></div>
<svg style="left:680.6px;top:427.3px" width="34" height="32" viewBox="0 0 34 32"><polygon points="17,1.6 20.4,9.9 32,11.6 23.9,19.8 27.4,29.8 17,24.4 6.4,29.8 9.8,19.8 1.8,11.6 13.4,9.9" fill="#fff" stroke="#c3d7fb" stroke-width="2.2" stroke-linejoin="round"/></svg>
<svg style="left:740.6px;top:427.7px" width="34" height="34" viewBox="0 0 34 34"><path d="M3.3,5.6 L13.8,5.6 L15.9,1.4 L32.6,1.4 L29.8,15.4 L27,30 Q25,33 22.2,31.4 L21,30 L22.3,20.6 L20.4,18.4 L13.2,20.4 L1.9,21 Z" fill="#fff" stroke="#c3d7fb" stroke-width="2.2" stroke-linejoin="round"/></svg>
<span class="t" style="left:799.20px;top:430.00px;font-size:24px;color:#000;transform:scaleY(1.02);transform-origin:0 20px;">1.</span>
<span class="t" style="left:856.60px;top:430.00px;font-size:24px;color:#1c1c1c;transform:scaleY(1.02);transform-origin:0 20px;">491ec41b-</span>
<span class="t" style="left:856.60px;top:458.00px;font-size:24px;color:#1c1c1c;transform:scaleY(1.02);transform-origin:0 20px;">0a80-4ce9-</span>
<span class="t" style="left:856.60px;top:486.00px;font-size:24px;color:#1c1c1c;transform:scaleY(1.02);transform-origin:0 20px;">b754-</span>
<span class="t" style="left:856.60px;top:514.00px;font-size:24px;color:#1c1c1c;transform:scaleY(1.02);transform-origin:0 20px;">2983c6f38e71</span>
<span class="t" style="right:2189.70px;top:430.00px;font-size:24px;color:#2d882d;transform:scaleY(1.02);transform-origin:0 20px;">6545</span>
<span class="t" style="left:1212.60px;top:430.00px;font-size:24px;color:#1c1c1c;transform:scaleY(1.02);transform-origin:0 20px;">9</span>
<span class="t" style="left:1318.70px;top:430.00px;font-size:24px;color:#1c1c1c;transform:scaleY(1.02);transform-origin:0 20px;">18</span>
<span class="t" style="right:1885.40px;top:430.00px;font-size:24px;color:#2d882d;transform:scaleY(1.02);transform-origin:0 20px;">1982</span>
<span class="t" style="right:1742.80px;top:430.00px;font-size:24px;color:#2d882d;transform:scaleY(1.02);transform-origin:0 20px;">62</span>
<span class="t" style="left:1660.00px;top:430.00px;font-size:24px;color:#1c1c1c;transform:scaleY(1.02);transform-origin:0 20px;">4dc16022-</span>
<span class="t" style="left:1660.00px;top:458.00px;font-size:24px;color:#1c1c1c;transform:scaleY(1.02);transform-origin:0 20px;">f28d-4b9d-</span>
<span class="t" style="left:1660.00px;top:486.00px;font-size:24px;color:#1c1c1c;transform:scaleY(1.02);transform-origin:0 20px;">9062-</span>
<span class="t" style="left:1660.00px;top:514.00px;font-size:24px;color:#1c1c1c;transform:scaleY(1.02);transform-origin:0 20px;">c7bc3ad43362</span>
<span class="t" style="left:1847.10px;top:430.00px;font-size:24px;color:#1c1c1c;transform:scaleY(1.02);transform-origin:0 20px;">13</span>
<span class="t" style="left:1968.70px;top:430.00px;font-size:24px;color:#1c1c1c;transform:scaleY(1.02);transform-origin:0 20px;">13</span>
<span class="t" style="left:2103.50px;top:430.00px;font-size:24px;color:#1c1c1c;transform:scaleY(1.02);transform-origin:0 20px;">36</span>
<span class="t" style="left:2236.00px;top:430.00px;font-size:24px;color:#1c1c1c;transform:scaleY(1.02);transform-origin:0 20px;">AB</span>
<span class="t" style="left:2901.20px;top:430.00px;font-size:24px;color:#1c1c1c;transform:scaleY(1.02);transform-origin:0 20px;">Amphispiza</span>
<span class="t" style="left:3146.20px;top:430.00px;font-size:24px;color:#1c1c1c;transform:scaleY(1.02);transform-origin:0 20px;">bilineata</span>
<svg style="left:680.6px;top:549.3px" width="34" height="32" viewBox="0 0 34 32"><polygon points="17,1.6 20.4,9.9 32,11.6 23.9,19.8 27.4,29.8 17,24.4 6.4,29.8 9.8,19.8 1.8,11.6 13.4,9.9" fill="#fff" stroke="#c3d7fb" stroke-width="2.2" stroke-linejoin="round"/></svg>
<svg style="left:740.6px;top:549.7px" width="34" height="34" viewBox="0 0 34 34"><path d="M3.3,5.6 L13.8,5.6 L15.9,1.4 L32.6,1.4 L29.8,15.4 L27,30 Q25,33 22.2,31.4 L21,30 L22.3,20.6 L20.4,18.4 L13.2,20.4 L1.9,21 Z" fill="#fff" stroke="#c3d7fb" stroke-width="2.2" stroke-linejoin="round"/></svg>
<span class="t" style="left:799.20px;top:552.00px;font-size:24px;color:#000;transform:scaleY(1.02);transform-origin:0 20px;">2.</span>
<span class="t" style="left:856.60px;top:552.00px;font-size:24px;color:#1c1c1c;transform:scaleY(1.02);transform-origin:0 20px;">f280bade-</span>
<span class="t" style="left:856.60px;top:580.00px;font-size:24px;color:#1c1c1c;transform:scaleY(1.02);transform-origin:0 20px;">4e9b-447d-</span>
<span class="t" style="left:856.60px;top:608.00px;font-size:24px;color:#1c1c1c;transform:scaleY(1.02);transform-origin:0 20px;">afe0-</span>
<span class="t" style="left:856.60px;top:636.00px;font-size:24px;color:#1c1c1c;transform:scaleY(1.02);transform-origin:0 20px;">9e6d45e6bfb0</span>
<span class="t" style="right:2189.70px;top:552.00px;font-size:24px;color:#2d882d;transform:scaleY(1.02);transform-origin:0 20px;">5220</span>
<span class="t" style="left:1212.60px;top:552.00px;font-size:24px;color:#1c1c1c;transform:scaleY(1.02);transform-origin:0 20px;">1</span>
<span class="t" style="left:1318.70px;top:552.00px;font-size:24px;color:#1c1c1c;transform:scaleY(1.02);transform-origin:0 20px;">24</span>
<span class="t" style="right:1885.40px;top:552.00px;font-size:24px;color:#2d882d;transform:scaleY(1.02);transform-origin:0 20px;">1982</span>
<span class="t" style="right:1742.80px;top:552.00px;font-size:24px;color:#2d882d;transform:scaleY(1.02);transform-origin:0 20px;">54</span>
<span class="t" style="left:1660.00px;top:552.00px;font-size:24px;color:#1c1c1c;transform:scaleY(1.02);transform-origin:0 20px;">dcbbd373-</span>
<span class="t" style="left:1660.00px;top:580.00px;font-size:24px;color:#1c1c1c;transform:scaleY(1.02);transform-origin:0 20px;">c22e-46ef-</span>
<span class="t" style="left:1660.00px;top:608.00px;font-size:24px;color:#1c1c1c;transform:scaleY(1.02);transform-origin:0 20px;">ae8b-</span>
<span class="t" style="left:1660.00px;top:636.00px;font-size:24px;color:#1c1c1c;transform:scaleY(1.02);transform-origin:0 20px;">ad88f5cf7475</span>
<span class="t" style="left:1847.10px;top:552.00px;font-size:24px;color:#1c1c1c;transform:scaleY(1.02);transform-origin:0 20px;">20</span>
<span class="t" style="left:1968.70px;top:552.00px;font-size:24px;color:#1c1c1c;transform:scaleY(1.02);transform-origin:0 20px;">13</span>
<span class="t" style="left:2103.50px;top:552.00px;font-size:24px;color:#1c1c1c;transform:scaleY(1.02);transform-origin:0 20px;">27</span>
<span class="t" style="left:2236.00px;top:552.00px;font-size:24px;color:#1c1c1c;transform:scaleY(1.02);transform-origin:0 20px;">AB</span>
<span class="t" style="left:2901.20px;top:552.00px;font-size:24px;color:#1c1c1c;transform:scaleY(1.02);transform-origin:0 20px;">Amphispiza</span>
<span class="t" style="left:3146.20px;top:552.00px;font-size:24px;color:#1c1c1c;transform:scaleY(1.02);transform-origin:0 20px;">bilineata</span>
<svg style="left:680.6px;top:673.1px" width="34" height="32" viewBox="0 0 34 32"><polygon points="17,1.6 20.4,9.9 32,11.6 23.9,19.8 27.4,29.8 17,24.4 6.4,29.8 9.8,19.8 1.8,11.6 13.4,9.9" fill="#fff" stroke="#c3d7fb" stroke-width="2.2" stroke-linejoin="round"/></svg>
<svg style="left:740.6px;top:673.5px" width="34" height="34" viewBox="0 0 34 34"><path d="M3.3,5.6 L13.8,5.6 L15.9,1.4 L32.6,1.4 L29.8,15.4 L27,30 Q25,33 22.2,31.4 L21,30 L22.3,20.6 L20.4,18.4 L13.2,20.4 L1.9,21 Z" fill="#fff" stroke="#c3d7fb" stroke-width="2.2" stroke-linejoin="round"/></svg>
<span class="t" style="left:799.20px;top:676.00px;font-size:24px;color:#000;transform:scaleY(1.02);transform-origin:0 20px;">3.</span>
<span class="t" style="left:856.60px;top:676.00px;font-size:24px;color:#1c1c1c;transform:scaleY(1.02);transform-origin:0 20px;">2b1b4a8a-</span>
<span class="t" style="left:856.60px;top:704.00px;font-size:24px;color:#1c1c1c;transform:scaleY(1.02);transform-origin:0 20px;">c3e9-4781-</span>
<span class="t" style="left:856.60px;top:732.00px;font-size:24px;color:#1c1c1c;transform:scaleY(1.02);transform-origin:0 20px;">a5f9-</span>
<span class="t" style="left:856.60px;top:760.00px;font-size:24px;color:#1c1c1c;transform:scaleY(1.02);transform-origin:0 20px;">18b081383876</span>
<span class="t" style="right:2189.70px;top:676.00px;font-size:24px;color:#2d882d;transform:scaleY(1.02);transform-origin:0 20px;">18932</span>
<span class="t" style="left:1212.60px;top:676.00px;font-size:24px;color:#1c1c1c;transform:scaleY(1.02);transform-origin:0 20px;">8</span>
<span class="t" style="left:1318.70px;top:676.00px;font-size:24px;color:#1c1c1c;transform:scaleY(1.02);transform-origin:0 20px;">7</span>
<span class="t" style="right:1885.40px;top:676.00px;font-size:24px;color:#2d882d;transform:scaleY(1.02);transform-origin:0 20px;">1991</span>
<span class="t" style="right:1742.80px;top:676.00px;font-size:24px;color:#2d882d;transform:scaleY(1.02);transform-origin:0 20px;">162</span>
<span class="t" style="left:1660.00px;top:676.00px;font-size:24px;color:#1c1c1c;transform:scaleY(1.02);transform-origin:0 20px;">1e87b11b-</span>
<span class="t" style="left:1660.00px;top:704.00px;font-size:24px;color:#1c1c1c;transform:scaleY(1.02);transform-origin:0 20px;">4795-4f41-</span>
<span class="t" style="left:1660.00px;top:732.00px;font-size:24px;color:#1c1c1c;transform:scaleY(1.02);transform-origin:0 20px;">bdff-</span>
<span class="t" style="left:1660.00px;top:760.00px;font-size:24px;color:#1c1c1c;transform:scaleY(1.02);transform-origin:0 20px;">2d5c4412be25</span>
<span class="t" style="left:1847.10px;top:676.00px;font-size:24px;color:#1c1c1c;transform:scaleY(1.02);transform-origin:0 20px;">19</span>
<span class="t" style="left:1968.70px;top:676.00px;font-size:24px;color:#1c1c1c;transform:scaleY(1.02);transform-origin:0 20px;">13</span>
<span class="t" style="left:2103.50px;top:676.00px;font-size:24px;color:#1c1c1c;transform:scaleY(1.02);transform-origin:0 20px;">33</span>
<span class="t" style="left:2236.00px;top:676.00px;font-size:24px;color:#1c1c1c;transform:scaleY(1.02);transform-origin:0 20px;">AS</span>
<span class="t" style="left:2401.20px;top:676.00px;font-size:24px;color:#1c1c1c;transform:scaleY(1.02);transform-origin:0 20px;">Ammodramus</span>
<span class="t" style="left:2654.20px;top:676.00px;font-size:24px;color:#1c1c1c;transform:scaleY(1.02);transform-origin:0 20px;">savannarum</span>
<svg style="left:680.6px;top:1131.4px" width="34" height="32" viewBox="0 0 34 32"><polygon points="17,1.6 20.4,9.9 32,11.6 23.9,19.8 27.4,29.8 17,24.4 6.4,29.8 9.8,19.8 1.8,11.6 13.4,9.9" fill="#fff" stroke="#c3d7fb" stroke-width="2.2" stroke-linejoin="round"/></svg>
<svg style="left:740.6px;top:1131.8px" width="34" height="34" viewBox="0 0 34 34"><path d="M3.3,5.6 L13.8,5.6 L15.9,1.4 L32.6,1.4 L29.8,15.4 L27,30 Q25,33 22.2,31.4 L21,30 L22.3,20.6 L20.4,18.4 L13.2,20.4 L1.9,21 Z" fill="#fff" stroke="#c3d7fb" stroke-width="2.2" stroke-linejoin="round"/></svg>
<span class="t" style="left:799.20px;top:1134.00px;font-size:24px;color:#000;transform:scaleY(1.02);transform-origin:0 20px;">4.</span>
<span class="t" style="left:856.60px;top:1134.00px;font-size:24px;color:#1c1c1c;transform:scaleY(1.02);transform-origin:0 20px;">e98e66c4-</span>
<span class="t" style="left:856.60px;top:1162.00px;font-size:24px;color:#1c1c1c;transform:scaleY(1.02);transform-origin:0 20px;">514b-45f7-</span>
<span class="t" style="left:856.60px;top:1190.00px;font-size:24px;color:#1c1c1c;transform:scaleY(1.02);transform-origin:0 20px;">9d95-</span>
<span class="t" style="left:856.60px;top:1218.00px;font-size:24px;color:#1c1c1c;transform:scaleY(1.02);transform-origin:0 20px;">336c05a72b21</span>
<span class="t" style="right:2189.70px;top:1134.00px;font-size:24px;color:#2d882d;transform:scaleY(1.02);transform-origin:0 20px;">20588</span>
<span class="t" style="left:1212.60px;top:1134.00px;font-size:24px;color:#1c1c1c;transform:scaleY(1.02);transform-origin:0 20px;">1</span>
<span class="t" style="left:1318.70px;top:1134.00px;font-size:24px;color:#1c1c1c;transform:scaleY(1.02);transform-origin:0 20px;">24</span>
<span class="t" style="right:1885.40px;top:1134.00px;font-size:24px;color:#2d882d;transform:scaleY(1.02);transform-origin:0 20px;">1993</span>
<span class="t" style="right:1742.80px;top:1134.00px;font-size:24px;color:#2d882d;transform:scaleY(1.02);transform-origin:0 20px;">179</span>
<span class="t" style="left:1660.00px;top:1134.00px;font-size:24px;color:#1c1c1c;transform:scaleY(1.02);transform-origin:0 20px;">91829d58-</span>
<span class="t" style="left:1660.00px;top:1162.00px;font-size:24px;color:#1c1c1c;transform:scaleY(1.02);transform-origin:0 20px;">c12e-47e8-</span>
<span class="t" style="left:1660.00px;top:1190.00px;font-size:24px;color:#1c1c1c;transform:scaleY(1.02);transform-origin:0 20px;">ae31-</span>
<span class="t" style="left:1660.00px;top:1218.00px;font-size:24px;color:#1c1c1c;transform:scaleY(1.02);transform-origin:0 20px;">185f46be21d2</span>
<span class="t" style="left:1847.10px;top:1134.00px;font-size:24px;color:#1c1c1c;transform:scaleY(1.02);transform-origin:0 20px;">12</span>
<span class="t" style="left:1968.70px;top:1134.00px;font-size:24px;color:#1c1c1c;transform:scaleY(1.02);transform-origin:0 20px;">13</span>
<span class="t" style="left:2103.50px;top:1134.00px;font-size:24px;color:#1c1c1c;transform:scaleY(1.02);transform-origin:0 20px;">41</span>
<span class="t" style="left:2236.00px;top:1134.00px;font-size:24px;color:#1c1c1c;transform:scaleY(1.02);transform-origin:0 20px;">AS</span>
<span class="t" style="left:2401.20px;top:1134.00px;font-size:24px;color:#1c1c1c;transform:scaleY(1.02);transform-origin:0 20px;">Ammodramus</span>
<span class="t" style="left:2654.20px;top:1134.00px;font-size:24px;color:#1c1c1c;transform:scaleY(1.02);transform-origin:0 20px;">savannarum</span>
<div class="r" style="left:3069.80px;top:1157.40px;width:50.20px;height:28.80px;background:#a5b6ef;border-radius:4px;"></div>
<span class="t" style="left:3074.50px;top:1163.00px;font-size:21.5px;color:#fff;font-weight:700;-webkit-text-stroke:0;transform:scaleY(1.02);transform-origin:0 17px;">edit</span>
<div class="r" style="left:670.20px;top:1730.20px;width:2707.80px;height:21.80px;background:#fafafa;border-top:2px solid #e3e3e3;box-sizing:border-box;"></div>
<div class="r" style="left:676.40px;top:1738.20px;width:1028.60px;height:15.60px;background:#c1c1c1;border-radius:7.8px;"></div>
<div class="r" style="left:3055.50px;top:1719.30px;width:344.50px;height:50.70px;background:;box-sizing:border-box;border:1.6px solid #bcbcbc;border-radius:7px 0 0 0;background:linear-gradient(#f6f6f6,#dedede);"></div>
<span class="t" style="left:3068.50px;top:1728.00px;font-size:24px;color:#000;transform:scaleY(1.0);transform-origin:0 20px;">portal_project_test</span>
<span class="t" style="left:3265.90px;top:1728.00px;font-size:24px;color:#000;letter-spacing:0.6px;transform:scaleY(1.0);transform-origin:0 20px;"> - OpenRefine</span>
</div>
</body></html>
